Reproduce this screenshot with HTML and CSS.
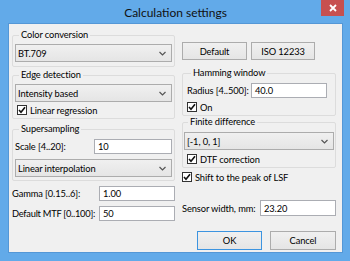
FILE: index.html
```html
<!DOCTYPE html>
<html lang="en">
<head>
    <meta charset="UTF-8">
    <title>Calculation settings</title>
    <link rel="stylesheet" href="styles.css">
</head>
<body>
    <div class="window">
        <div class="titlebar">
            <span class="title">Calculation settings</span>
            <div class="close">
                <svg width="8" height="8" viewBox="0 0 8 8"><path d="M1 1L7 7M7 1L1 7" stroke="#fff" stroke-width="1.8"/></svg>
            </div>
        </div>

        <div class="client">
            <div class="col col-left">
                <fieldset class="group g-color">
                    <legend>Color conversion</legend>
                    <div class="combo"><span>BT.709</span><svg class="chev" width="7" height="5" viewBox="0 0 7 5"><path d="M0.5 1L3.5 4L6.5 1" fill="none" stroke="#555" stroke-width="1.2"/></svg></div>
                </fieldset>

                <fieldset class="group g-edge">
                    <legend>Edge detection</legend>
                    <div class="combo"><span>Intensity based</span><svg class="chev" width="7" height="5" viewBox="0 0 7 5"><path d="M0.5 1L3.5 4L6.5 1" fill="none" stroke="#555" stroke-width="1.2"/></svg></div>
                    <div class="check"><span class="box"><svg width="8" height="8" viewBox="0 0 8 8"><path d="M1 4L3 6.3L7 1.2" fill="none" stroke="#111" stroke-width="1.6"/></svg></span>Linear regression</div>
                </fieldset>

                <fieldset class="group g-super">
                    <legend>Supersampling</legend>
                    <div class="field"><span class="label">Scale [4..20]:</span><div class="edit">10</div></div>
                    <div class="combo"><span>Linear interpolation</span><svg class="chev" width="7" height="5" viewBox="0 0 7 5"><path d="M0.5 1L3.5 4L6.5 1" fill="none" stroke="#555" stroke-width="1.2"/></svg></div>
                </fieldset>

                <div class="field f-gamma"><span class="label">Gamma [0.15..6]:</span><div class="edit">1.00</div></div>
                <div class="field f-mtf"><span class="label">Default MTF [0..100]:</span><div class="edit">50</div></div>
            </div>

            <div class="col col-right">
                <div class="btn-row top-btns">
                    <div class="btn b-default">Default</div>
                    <div class="btn b-iso">ISO 12233</div>
                </div>

                <fieldset class="group g-hamming">
                    <legend>Hamming window</legend>
                    <div class="field"><span class="label">Radius [4..500]:</span><div class="edit">40.0</div></div>
                    <div class="check"><span class="box"><svg width="8" height="8" viewBox="0 0 8 8"><path d="M1 4L3 6.3L7 1.2" fill="none" stroke="#111" stroke-width="1.6"/></svg></span>On</div>
                </fieldset>

                <fieldset class="group g-finite">
                    <legend>Finite difference</legend>
                    <div class="combo"><span>[-1, 0, 1]</span><svg class="chev" width="7" height="5" viewBox="0 0 7 5"><path d="M0.5 1L3.5 4L6.5 1" fill="none" stroke="#555" stroke-width="1.2"/></svg></div>
                    <div class="check"><span class="box"><svg width="8" height="8" viewBox="0 0 8 8"><path d="M1 4L3 6.3L7 1.2" fill="none" stroke="#111" stroke-width="1.6"/></svg></span>DTF correction</div>
                </fieldset>

                <div class="check c-shift"><span class="box"><svg width="8" height="8" viewBox="0 0 8 8"><path d="M1 4L3 6.3L7 1.2" fill="none" stroke="#111" stroke-width="1.6"/></svg></span>Shift to the peak of LSF</div>

                <div class="field f-sensor"><span class="label">Sensor width, mm:</span><div class="edit">23.20</div></div>

                <div class="btn-row bottom-btns">
                    <div class="btn b-ok">OK</div>
                    <div class="btn b-cancel">Cancel</div>
                </div>
            </div>

            <div class="grip"></div>
        </div>
    </div>
</body>
</html>
```

FILE: styles.css
```css
* {
    margin: 0;
    padding: 0;
    box-sizing: border-box;
}
body {
    width: 350px;
    height: 261px;
    overflow: hidden;
    font-family: Lato, "Noto Sans", sans-serif;
    font-size: 9.3px;
    letter-spacing: -0.1px;
    color: #000;
    white-space: nowrap;
}
.window {
    position: relative;
    width: 350px;
    height: 261px;
    background-color: #62aae9;
    padding: 0 7px 8px 8px;
    display: flex;
    flex-direction: column;
}
.titlebar {
    flex-shrink: 0;
    height: 23px;
    display: flex;
    justify-content: center;
    align-items: center;
    font-size: 12px;
    letter-spacing: 0;
    color: #111;
    padding-top: 1px;
}
.close {
    position: absolute;
    top: 0;
    right: 6px;
    width: 23px;
    height: 16px;
    background-color: #c75050;
    display: flex;
    justify-content: center;
    align-items: center;
}
.client {
    position: relative;
    flex: 1;
    min-height: 0;
    overflow: hidden;
    background-color: #f0f0f0;
    border: 1px solid #5497d6;
    display: flex;
    gap: 7px;
    padding: 5px 6px 0 3px;
}
.col {
    display: flex;
    flex-direction: column;
}
.col-left {
    width: 163px;
}
.col-right {
    width: 154px;
}
.group {
    border: 1px solid #dcdcdc;
    border-radius: 2px;
    padding: 3px 2px 4px 2px;
    display: flex;
    flex-direction: column;
}
.group legend {
    margin-left: 4px;
    padding: 0 2px;
    line-height: 12px;
}
.combo {
    height: 18px;
    border: 1px solid #acacac;
    background: linear-gradient(#f0f0f0, #e5e5e5);
    display: flex;
    align-items: center;
    justify-content: space-between;
    padding: 0 5px 0 2px;
}
.edit {
    flex-shrink: 0;
    height: 15px;
    background-color: #fff;
    border: 1px solid #abadb3;
    display: flex;
    align-items: center;
    padding-left: 3px;
}
.field {
    display: flex;
    align-items: center;
    justify-content: space-between;
}
.check {
    display: flex;
    align-items: center;
    height: 12px;
}
.box {
    width: 10px;
    height: 10px;
    border: 1px solid #333;
    background-color: #fff;
    display: flex;
    justify-content: center;
    align-items: center;
    margin-right: 3px;
}
.btn-row {
    display: flex;
    gap: 4px;
}
.btn {
    height: 18px;
    border: 1px solid #acacac;
    background: linear-gradient(#f0f0f0, #e5e5e5);
    display: flex;
    justify-content: center;
    align-items: center;
}

/* left column */
.g-edge {
    margin-top: 2px;
    padding-bottom: 2px;
}
.g-edge .check {
    margin: 2px 0 0 2px;
}
.g-super {
    margin-top: 4px;
    padding: 4px 2px 3px 2px;
}
.g-super .field .edit {
    width: 78px;
}
.g-super .combo {
    margin-top: 5px;
}
.f-gamma {
    margin-top: 5px;
}
.f-mtf {
    margin-top: 5px;
}
.f-mtf .label {
    letter-spacing: -0.25px;
}
.f-gamma .edit,
.f-mtf .edit {
    width: 76px;
}

/* right column */
.top-btns {
    margin-top: 13px;
}
.b-default {
    width: 65px;
}
.b-iso {
    width: 64px;
}
.g-hamming {
    margin-top: 7px;
    padding: 4px 8px 2px 4px;
}
.g-hamming .edit {
    width: 76px;
}
.g-hamming .check {
    margin-top: 3px;
}
.g-finite {
    margin-top: 0;
    padding: 4px 1px 2px 1px;
}
.g-finite .check {
    margin: 3px 0 0 3px;
}
.c-shift {
    margin-top: 3px;
}
.f-sensor {
    margin-top: 17px;
}
.f-sensor .edit {
    width: 76px;
    height: 16px;
}
.bottom-btns {
    margin-top: 15px;
    justify-content: flex-end;
    gap: 8px;
}
.b-ok {
    width: 65px;
    height: 19px;
    border-color: #3c94e0;
}
.b-cancel {
    width: 66px;
    height: 19px;
}
.grip {
    position: absolute;
    right: 1px;
    bottom: 1px;
    width: 6px;
    height: 6px;
    background-image: radial-gradient(#b8b8b8 40%, transparent 45%);
    background-size: 2px 2px;
}
```
